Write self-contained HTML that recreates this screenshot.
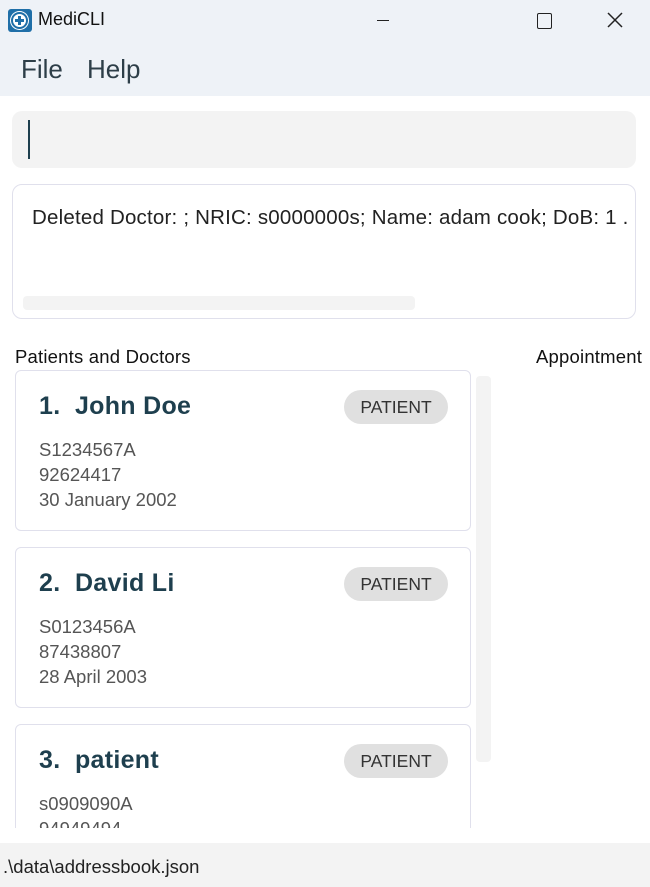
<!DOCTYPE html>
<html><head><style>
*{margin:0;padding:0;box-sizing:border-box}
body{width:650px;height:887px;overflow:hidden;background:#fff;font-family:"Liberation Sans",sans-serif;position:relative}
.abs{position:absolute}
.card{position:absolute;left:15px;width:456px;height:161px;border:1.5px solid #e0e0ec;border-radius:6px;background:#fff}
.name{position:absolute;left:23px;top:21px;font-size:25px;font-weight:bold;color:#1e3f4e;white-space:pre;letter-spacing:0.3px}
.badge{position:absolute;left:328px;top:19px;width:104px;height:34px;border-radius:17px;background:#e0e0e0;color:#333;font-size:17.5px;text-align:center;line-height:34px}
.det{position:absolute;left:23px;top:66px;font-size:18.5px;color:#555;line-height:25px}
</style></head><body>
<div class="abs" style="left:0;top:0;width:650px;height:96px;background:#eef2f7"></div>
<div class="abs" style="left:8px;top:9px;width:24px;height:23px;background:#1f6fa8;border-radius:3px"><div style="position:absolute;left:3px;top:3px;width:17px;height:17px;border-radius:50%;background:#fff;border:2px solid #1f6fa8;box-shadow:0 0 0 1px #fff"></div><div style="position:absolute;left:10px;top:7px;width:3px;height:9px;background:#1f6fa8"></div><div style="position:absolute;left:7px;top:10px;width:9px;height:3px;background:#1f6fa8"></div></div>
<div class="abs" style="left:38px;top:9px;font-size:18px;color:#111">MediCLI</div>
<div class="abs" style="left:377px;top:20px;width:12px;height:1px;background:#222"></div>
<div class="abs" style="left:537px;top:13px;width:15px;height:16px;border:1.5px solid #222;border-radius:2px"></div>
<svg class="abs" style="left:607px;top:12px" width="16" height="16"><path d="M1 1L15 15M15 1L1 15" stroke="#222" stroke-width="1.5"/></svg>
<div class="abs" style="left:21px;top:54px;font-size:26px;color:#2d3e48">File</div>
<div class="abs" style="left:87px;top:54px;font-size:26px;color:#2d3e48">Help</div>
<div class="abs" style="left:12px;top:111px;width:624px;height:57px;background:#f3f3f3;border-radius:10px"></div>
<div class="abs" style="left:28px;top:120px;width:1.5px;height:39px;background:#1e3f4e"></div>
<div class="abs" style="left:12px;top:184px;width:624px;height:135px;border:1.5px solid #e0e0ec;border-radius:10px;overflow:hidden"><div style="position:absolute;left:19px;top:21px;font-size:20.5px;color:#222;white-space:nowrap;letter-spacing:0.2px">Deleted Doctor: ; NRIC: s0000000s; Name: adam cook; DoB: 1 .</div></div>
<div class="abs" style="left:23px;top:296px;width:392px;height:14px;background:#f3f3f3;border-radius:4px"></div>
<div class="abs" style="left:15px;top:346px;font-size:18.5px;color:#111;letter-spacing:0.2px">Patients and Doctors</div>
<div class="abs" style="left:536px;top:346px;font-size:18.5px;color:#111;white-space:nowrap;letter-spacing:0.2px">Appointment</div>
<div class="abs" style="left:476px;top:376px;width:15px;height:386px;background:#f3f3f3;border-radius:4px"></div>
<div class="card" style="top:370px"><div class="name">1.  John Doe</div><div class="badge">PATIENT</div><div class="det">S1234567A<br>92624417<br>30 January 2002</div></div>
<div class="card" style="top:547px"><div class="name">2.  David Li</div><div class="badge">PATIENT</div><div class="det">S0123456A<br>87438807<br>28 April 2003</div></div>
<div style="position:absolute;left:0;top:0;width:650px;height:828px;overflow:hidden">
<div class="card" style="top:724px"><div class="name">3.  patient</div><div class="badge">PATIENT</div><div class="det">s0909090A<br>94949494</div></div>
</div>
<div class="abs" style="left:0;top:843px;width:650px;height:44px;background:#f3f3f3"></div>
<div class="abs" style="left:3px;top:856px;font-size:18.5px;color:#222">.\data\addressbook.json</div>
</body></html>
